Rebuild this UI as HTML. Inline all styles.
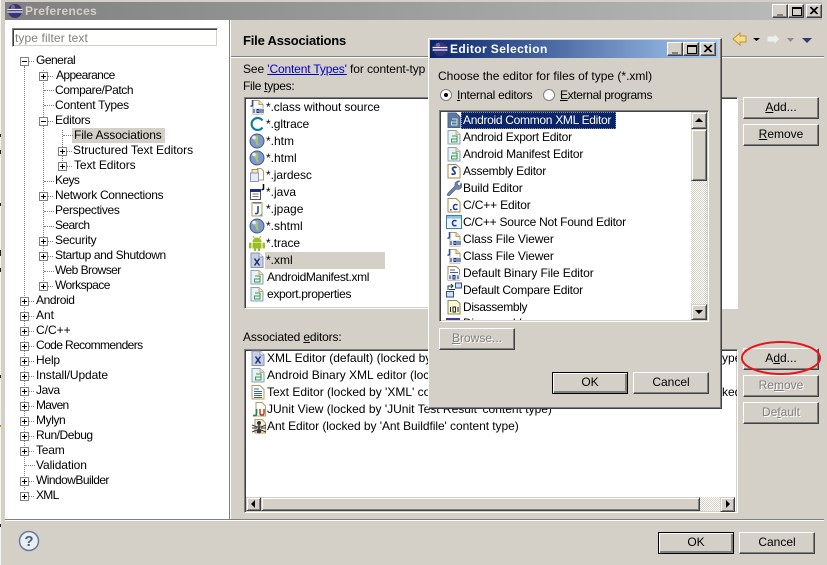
<!DOCTYPE html>
<html><head><meta charset="utf-8"><style>
html,body{margin:0;padding:0}
body{width:827px;height:565px;overflow:hidden;position:relative;background:#d4d0c8;font:12px/15px "Liberation Sans","IPAGothic",sans-serif;color:#000}
div,svg,span.a{position:absolute}
.t{position:absolute;white-space:nowrap;height:15px}
.tr{position:absolute;white-space:nowrap;height:15px}
.p,.m{position:absolute;width:7px;height:7px;margin-top:1px;border:1px solid #808080}
.p{background:linear-gradient(#000,#000) 1px 3px/5px 1px no-repeat,linear-gradient(#000,#000) 3px 1px/1px 5px no-repeat,#fff}
.m{background:linear-gradient(#000,#000) 1px 3px/5px 1px no-repeat,#fff}
.p:after,.m:after{content:"";position:absolute;left:8px;top:3px;width:5px;height:0;border-top:1px dotted #808080}
.v{position:absolute;width:0;border-left:1px dotted #808080}
.h{position:absolute;height:0;border-top:1px dotted #808080}
.b{position:absolute;box-sizing:border-box;border:1px solid;border-color:#fff #404040 #404040 #fff;box-shadow:inset -1px -1px #808080;background:#d4d0c8;text-align:center;line-height:19px}
.k{border-color:#000;box-shadow:inset 1px 1px #fff,inset -2px -2px #808080}
.d{color:#808080;text-shadow:1px 1px #fff}
.sunk{position:absolute;box-sizing:border-box;background:#fff;border:1px solid;border-color:#808080 #fff #fff #808080;box-shadow:inset 1px 1px #404040,inset -1px -1px #d4d0c8}
.sb{position:absolute;box-sizing:border-box;border:1px solid;border-color:#d4d0c8 #404040 #404040 #d4d0c8;box-shadow:inset 1px 1px #fff,inset -1px -1px #808080;background:#d4d0c8}
.dith{position:absolute;background:repeating-conic-gradient(#d4d0c8 0 25%,#fff 0 50%) 0 0/2px 2px}
.w{position:absolute;box-sizing:border-box;width:16px;height:14px;border:1px solid;border-color:#fff #404040 #404040 #fff;box-shadow:inset -1px -1px #808080;background:#d4d0c8}
u{text-decoration:underline}
svg.i{width:16px;height:16px;overflow:visible}
</style></head><body>
<svg width="0" height="0" style="position:absolute"><defs>
<symbol id="eclipse" viewBox="0 0 16 16"><circle cx="8" cy="8" r="7" fill="#3a3278"/><path d="M.5 6.500h15M.5 9h15" stroke="#f0f0fa" stroke-width="1.200"/><circle cx="6" cy="4" r="2" fill="#8a82c8" opacity=".7"/></symbol>
<symbol id="cls" viewBox="0 0 16 16"><path d="M4 1.500h6l4 4v9.500h-10z" fill="#fff" stroke="#b59a6a"/><path d="M10 1.500v4h4" fill="#f4e4bc" stroke="#b59a6a"/><path d="M3.500 1v5.500l-2 1" fill="none" stroke="#2a4e96" stroke-width="1.500"/><rect x="4" y="9" width="11" height="6" fill="#dbe6f6"/><path d="M5 10v4M8 10.500h2v3h-2zM12 10v4M14 10v4" stroke="#1b2f6b" fill="none"/></symbol>
<symbol id="gl" viewBox="0 0 16 16"><path d="M13.500 4.500a6 6 0 1 0 0 7" fill="none" stroke="#0e7f9c" stroke-width="2.200"/></symbol>
<symbol id="web" viewBox="0 0 16 16"><circle cx="8" cy="8" r="7" fill="#7c9ccc" stroke="#46587e"/><path d="M5 4c3-2 5 0 4 2-1 3 0 4 1 6-2 1-3-1-3-3-2-1-3-3-2-5z" fill="#b5c070"/><circle cx="5" cy="4.500" r="1.800" fill="#e8f0fa"/></symbol>
<symbol id="jar" viewBox="0 0 16 16"><path d="M8 1.500h4l2.500 2.500v9h-5" fill="#fff" stroke="#b59a6a"/><rect x="3" y="2.500" width="6" height="4" fill="#f6e6c0" stroke="#b08a44"/><rect x="1.500" y="6" width="8" height="8.500" fill="#e5ebf6" stroke="#8f9ab8"/></symbol>
<symbol id="java" viewBox="0 0 16 16"><rect x="1.500" y="5.500" width="10" height="10" fill="#fff" stroke="#555"/><rect x="1" y="5" width="11" height="3" fill="#1e2d88"/><path d="M3.500 10h6M3.500 12.500h6" stroke="#777"/><path d="M14.500 0v5l-2 1" fill="none" stroke="#000" stroke-width="1.500"/></symbol>
<symbol id="jp" viewBox="0 0 16 16"><rect x="3" y="1.500" width="10" height="13.500" fill="#fff" stroke="#b59a6a"/><path d="M5 1v2M7 1v2M9 1v2M11 1v2" stroke="#456"/><path d="M9 5v6q0 2-3 1.500" fill="none" stroke="#2a4e96" stroke-width="1.600"/><path d="M10 15l3-3v3z" fill="#6cb050"/></symbol>
<symbol id="andr" viewBox="0 0 16 16"><path d="M3.500 7a4.500 4.500 0 0 1 9 0z" fill="#98c024"/><path d="M5.500 3l-1.500-2M10.500 3l1.500-2" stroke="#98c024"/><rect x="3.500" y="7.500" width="9" height="6" fill="#98c024"/><rect x="0" y="7.500" width="2.500" height="6" rx="1" fill="#98c024"/><rect x="13.500" y="7.500" width="2.500" height="6" rx="1" fill="#98c024"/><rect x="5" y="13" width="2" height="3" fill="#98c024"/><rect x="9" y="13" width="2" height="3" fill="#98c024"/></symbol>
<symbol id="x" viewBox="0 0 16 16"><path d="M2 1h8l4 4v10.500h-12z" fill="#c5d0e6" stroke="#8b93ae"/><path d="M10 1v4h4" fill="#fff" stroke="#8b93ae"/><path d="M5.500 6.500l5 7M10.500 6.500l-5 7" stroke="#1b2f6b" stroke-width="1.500"/></symbol>
<symbol id="af" viewBox="0 0 16 16"><path d="M2 1.500h8l4 4v9.500h-12z" fill="#e8f0f8" stroke="#8aa0ba"/><path d="M10 1.500v4h4" fill="#f6dcb4" stroke="#d0a878"/><path d="M6 7h5v6h-5.500v-3h5" fill="none" stroke="#3f9a4a"/></symbol>
<symbol id="afs" viewBox="0 0 16 16"><path d="M2 1h8l4 4v10.500h-12z" fill="#5a78a6" stroke="#4a648e"/><path d="M6 7h5v6h-5.500v-3h5" fill="none" stroke="#cfe3cf"/></symbol>
<symbol id="txt" viewBox="0 0 16 16"><path d="M2 1.500h8l4 4v9.500h-12z" fill="#fff" stroke="#b59a6a"/><path d="M4 5h5M4 7.500h8M4 9.500h8M4 11.500h8M4 13.500h8" stroke="#3a5fa8"/></symbol>
<symbol id="ju" viewBox="0 0 16 16"><path d="M5 1.500h6l3.500 3.500v10h-9.500z" fill="#fff" stroke="#b59a6a"/><path d="M5.500 8v5q0 2-3.500 1.500" fill="none" stroke="#1a8a3a" stroke-width="1.700"/><path d="M9 8v4q0 2 2 2t2-2v-4" fill="none" stroke="#c8302a" stroke-width="1.500"/></symbol>
<symbol id="ant" viewBox="0 0 16 16"><path d="M4 1.500h7l3.500 3.500v10h-10.500z" fill="#f8f0dc" stroke="#b59a6a"/><ellipse cx="8" cy="5" rx="2" ry="2" fill="#333"/><ellipse cx="8" cy="9" rx="1.800" ry="2" fill="#555"/><ellipse cx="8" cy="13" rx="2.300" ry="2.500" fill="#333"/><path d="M1 7l5 2M15 7l-5 2M1 10h5M15 10h-5M1 14l5-2M15 14l-5-2" stroke="#333"/></symbol>
<symbol id="s" viewBox="0 0 16 16"><path d="M2 1.500h8l4 3.500v10h-12z" fill="#fff" stroke="#a8894a"/><path d="M10.500 5q-1-1.500-3-.5t0 3 1.500 3-3.500 .5" fill="none" stroke="#1e3c8c" stroke-width="1.700"/></symbol>
<symbol id="wr" viewBox="0 0 16 16"><path d="M1 15l1-2 7-7a4 4 0 0 1 5-5l-3 2 1 2 2 1 1-3a4 4 0 0 1-5 6l-7 7z" fill="#6f86b0" stroke="#4a5a80" stroke-width=".6"/></symbol>
<symbol id="cf" viewBox="0 0 16 16"><path d="M2 1.500h8l4 3.500v10h-12z" fill="#fff" stroke="#a8894a"/><path d="M11.500 8q-4-1.500-4 2t4 2" fill="none" stroke="#1e3c8c" stroke-width="1.500"/><rect x="4" y="12" width="1.500" height="1.500" fill="#1e3c8c"/></symbol>
<symbol id="cs" viewBox="0 0 16 16"><rect x=".5" y="1.500" width="15" height="13" fill="#eaf4fa" stroke="#3f7ea6"/><rect x="1" y="2" width="14" height="2.500" fill="#8ec0dc"/><path d="M10.500 7q-4-1.500-4 2t4 2.500" fill="none" stroke="#1e3c8c" stroke-width="1.500"/></symbol>
<symbol id="bin" viewBox="0 0 16 16"><path d="M2 1.500h8l3.500 3v10.500h-11.500z" fill="#fff" stroke="#a8894a"/><path d="M4 5h5M4 7.500h8" stroke="#3a5fa8"/><rect x="2" y="9.500" width="12.500" height="5.500" fill="#dbe6f6"/><path d="M4 10.500v3.500M7 10.500h2v3.500h-2zM12 10.500v3.500" stroke="#1b2f6b" fill="none"/></symbol>
<symbol id="cmp" viewBox="0 0 16 16"><rect x="9.500" y="1" width="6" height="5" fill="#cfe0f2" stroke="#2d4e86"/><rect x=".5" y="9.500" width="7" height="5.500" fill="#cfe0f2" stroke="#2d4e86"/><path d="M2 8v-4h5M5 2l2 2-2 2" fill="none" stroke="#234"/><path d="M3 7.500h6" stroke="#234"/></symbol>
<symbol id="dis" viewBox="0 0 16 16"><path d="M2 1.500h8.500l3.500 3v10.500h-12z" fill="#fbf8d8" stroke="#8a8660"/><path d="M4.500 8v5M7 8h2.500v5h-2.500zM12 8v5" stroke="#222" fill="none"/></symbol>
</defs></svg>

<!-- outer edge -->
<div style="left:0;top:0;width:1px;height:565px;background:#f4f4f4"></div>
<div style="left:0;top:134px;width:1px;height:3px;background:#222"></div><div style="left:0;top:150px;width:1px;height:4px;background:#222"></div><div style="left:0;top:203px;width:1px;height:3px;background:#222"></div><div style="left:0;top:250px;width:1px;height:6px;background:#222"></div><div style="left:0;top:268px;width:1px;height:4px;background:#222"></div><div style="left:0;top:375px;width:1px;height:3px;background:#222"></div><div style="left:0;top:425px;width:1px;height:2px;background:#c80"></div><div style="left:0;top:524px;width:1px;height:3px;background:#222"></div>

<!-- title bar -->
<div style="left:5px;top:2px;width:817px;height:18px;background:linear-gradient(90deg,#808080,#bcbcbc)"></div>
<svg class="i" style="left:7px;top:3px"><use href="#eclipse"/></svg>
<div class="t" style="left:25px;top:4px;font-weight:bold;color:#d4d0c8;letter-spacing:.3px">Preferences</div>
<div class="w" style="left:772px;top:4px"><div style="left:4px;top:9px;width:6px;height:2px;background:#808080"></div></div>
<div class="w" style="left:788px;top:4px"><div style="left:3px;top:2px;width:8px;height:6px;border:1px solid #000;border-top-width:2px"></div></div>
<div class="w" style="left:806px;top:4px"><svg width="14" height="12"><path d="M3 2l7 7M4 2l7 7M10 2l-7 7M11 2l-7 7" stroke="#000"/></svg></div>

<!-- left tree pane -->
<div style="left:5px;top:20px;width:224px;height:499px;background:#fff"></div>
<div style="left:229px;top:20px;width:1px;height:499px;background:#808080"></div>
<div style="left:230px;top:20px;width:1px;height:499px;background:#fff"></div>
<div style="left:5px;top:519px;width:819px;height:1px;background:#808080"></div>
<div style="left:5px;top:520px;width:819px;height:1px;background:#fff"></div>
<div class="sunk" style="left:12px;top:28px;width:206px;height:19px"></div>
<div class="t" style="left:15px;top:31px;color:#808080;letter-spacing:.1px">type filter text</div>

<div class="v" style="left:24px;top:66px;height:424px"></div>
<div class="v" style="left:43px;top:70px;height:215px"></div>
<div class="v" style="left:62px;top:130px;height:35px"></div>
<div style="left:72px;top:128px;width:93px;height:15px;background:#d4d0c8"></div>

<div class="m" style="left:20px;top:56px"></div><div class="tr" style="left:36px;top:53px;letter-spacing:-.5px">General</div>
<div class="p" style="left:39px;top:71px"></div><div class="tr" style="left:56px;top:68px;letter-spacing:-.6px">Appearance</div>
<div class="h" style="left:44px;top:90px;width:10px"></div><div class="tr" style="left:55px;top:83px;letter-spacing:-.4px">Compare/Patch</div>
<div class="h" style="left:44px;top:105px;width:10px"></div><div class="tr" style="left:55px;top:98px;letter-spacing:-.25px">Content Types</div>
<div class="m" style="left:39px;top:116px"></div><div class="tr" style="left:55px;top:113px;letter-spacing:-.3px">Editors</div>
<div class="h" style="left:63px;top:135px;width:10px"></div><div class="tr" style="left:74px;top:128px;letter-spacing:-.1px">File Associations</div>
<div class="p" style="left:58px;top:146px"></div><div class="tr" style="left:73px;top:143px;letter-spacing:-.05px">Structured Text Editors</div>
<div class="p" style="left:58px;top:161px"></div><div class="tr" style="left:74px;top:158px;letter-spacing:-.1px">Text Editors</div>
<div class="h" style="left:44px;top:181px;width:10px"></div><div class="tr" style="left:55px;top:173px;letter-spacing:-.6px">Keys</div>
<div class="p" style="left:39px;top:191px"></div><div class="tr" style="left:55px;top:188px;letter-spacing:-.3px">Network Connections</div>
<div class="h" style="left:44px;top:211px;width:10px"></div><div class="tr" style="left:55px;top:203px;letter-spacing:-.35px">Perspectives</div>
<div class="h" style="left:44px;top:226px;width:10px"></div><div class="tr" style="left:55px;top:218px;letter-spacing:-.6px">Search</div>
<div class="p" style="left:39px;top:236px"></div><div class="tr" style="left:55px;top:233px;letter-spacing:-.25px">Security</div>
<div class="p" style="left:39px;top:251px"></div><div class="tr" style="left:55px;top:248px;letter-spacing:-.4px">Startup and Shutdown</div>
<div class="h" style="left:44px;top:271px;width:10px"></div><div class="tr" style="left:55px;top:263px;letter-spacing:-.55px">Web Browser</div>
<div class="p" style="left:39px;top:281px"></div><div class="tr" style="left:55px;top:278px;letter-spacing:-.55px">Workspace</div>
<div class="p" style="left:20px;top:296px"></div><div class="tr" style="left:36px;top:293px;letter-spacing:-.4px">Android</div>
<div class="p" style="left:20px;top:311px"></div><div class="tr" style="left:36px;top:308px">Ant</div>
<div class="p" style="left:20px;top:326px"></div><div class="tr" style="left:36px;top:323px">C/C++</div>
<div class="p" style="left:20px;top:341px"></div><div class="tr" style="left:36px;top:338px;letter-spacing:-.6px">Code Recommenders</div>
<div class="p" style="left:20px;top:356px"></div><div class="tr" style="left:36px;top:353px;letter-spacing:-.2px">Help</div>
<div class="p" style="left:20px;top:371px"></div><div class="tr" style="left:36px;top:368px;letter-spacing:-.1px">Install/Update</div>
<div class="p" style="left:20px;top:386px"></div><div class="tr" style="left:36px;top:383px;letter-spacing:-.4px">Java</div>
<div class="p" style="left:20px;top:401px"></div><div class="tr" style="left:36px;top:398px;letter-spacing:-.7px">Maven</div>
<div class="p" style="left:20px;top:416px"></div><div class="tr" style="left:36px;top:413px;letter-spacing:-.4px">Mylyn</div>
<div class="p" style="left:20px;top:431px"></div><div class="tr" style="left:36px;top:428px;letter-spacing:-.45px">Run/Debug</div>
<div class="p" style="left:20px;top:446px"></div><div class="tr" style="left:36px;top:443px;letter-spacing:-.2px">Team</div>
<div class="h" style="left:25px;top:465px;width:10px"></div><div class="tr" style="left:36px;top:458px;letter-spacing:-.1px">Validation</div>
<div class="p" style="left:20px;top:476px"></div><div class="tr" style="left:36px;top:473px;letter-spacing:-.55px">WindowBuilder</div>
<div class="p" style="left:20px;top:491px"></div><div class="tr" style="left:36px;top:488px;letter-spacing:-.7px">XML</div>

<!-- right header -->
<div class="t" style="left:243px;top:33px;font-weight:bold;font-size:13px;letter-spacing:-.2px">File Associations</div>
<div style="left:231px;top:56px;width:593px;height:1px;background:#808080"></div>
<div style="left:231px;top:57px;width:593px;height:1px;background:#fff"></div>
<svg style="left:730px;top:30px" width="90" height="18"><path d="M3 9l7-6v3h6v6h-6v3z" fill="#f6dc88" stroke="#c89030"/><path d="M23 8h7l-3.500 3z" fill="#000"/><path d="M37 6h7v-3l6 6-6 6v-3h-7z" fill="#eeeeea" stroke="#d0d0c8"/><path d="M57 8h7l-3.500 4z" fill="#8c8c8c"/><path d="M72 8h10l-5 5z" fill="#3c3670"/></svg>

<div class="t" style="left:243px;top:62px;letter-spacing:-.1px">See <a style="color:#0000c8;text-decoration:underline;letter-spacing:-.15px">'Content Types'</a> for content-typ</div>
<div class="t" style="left:243px;top:79px;letter-spacing:-.3px">File <u>t</u>ypes:</div>

<!-- file types list -->
<div class="sunk" style="left:244px;top:97px;width:190px;height:212px"></div>
<div style="left:265px;top:252px;width:120px;height:17px;background:#d4d0c8"></div>
<svg class="i" style="left:249px;top:99px"><use href="#cls"/></svg><div class="t" style="left:266px;top:100px;letter-spacing:-.1px">*.class without source</div>
<svg class="i" style="left:249px;top:116px"><use href="#gl"/></svg><div class="t" style="left:266px;top:117px;letter-spacing:-.1px">*.gltrace</div>
<svg class="i" style="left:249px;top:133px"><use href="#web"/></svg><div class="t" style="left:266px;top:134px">*.htm</div>
<svg class="i" style="left:249px;top:150px"><use href="#web"/></svg><div class="t" style="left:266px;top:151px">*.html</div>
<svg class="i" style="left:249px;top:167px"><use href="#jar"/></svg><div class="t" style="left:266px;top:168px;letter-spacing:-.1px">*.jardesc</div>
<svg class="i" style="left:249px;top:184px"><use href="#java"/></svg><div class="t" style="left:266px;top:185px">*.java</div>
<svg class="i" style="left:249px;top:201px"><use href="#jp"/></svg><div class="t" style="left:266px;top:202px">*.jpage</div>
<svg class="i" style="left:249px;top:218px"><use href="#web"/></svg><div class="t" style="left:266px;top:219px">*.shtml</div>
<svg class="i" style="left:249px;top:235px"><use href="#andr"/></svg><div class="t" style="left:266px;top:236px;letter-spacing:-.1px">*.trace</div>
<svg class="i" style="left:249px;top:252px"><use href="#x"/></svg><div class="t" style="left:266px;top:253px">*.xml</div>
<svg class="i" style="left:249px;top:269px"><use href="#af"/></svg><div class="t" style="left:267px;top:270px;letter-spacing:-.35px">AndroidManifest.xml</div>
<svg class="i" style="left:249px;top:286px"><use href="#af"/></svg><div class="t" style="left:267px;top:287px;letter-spacing:-.35px">export.properties</div>
<div class="sunk" style="left:700px;top:97px;width:38px;height:212px;box-shadow:inset 0 1px #404040"></div>

<div class="b" style="left:743px;top:97px;width:76px;height:22px"><u>A</u>dd...</div>
<div class="b" style="left:743px;top:124px;width:76px;height:22px"><u>R</u>emove</div>

<div class="t" style="left:243px;top:330px;letter-spacing:-.15px">Associated <u>e</u>ditors:</div>
<!-- associated list -->
<div class="sunk" style="left:244px;top:349px;width:494px;height:164px"></div>
<svg class="i" style="left:250px;top:350px"><use href="#x"/></svg><div class="t" style="left:267px;top:351px">XML Editor (default) (locked by 'XML' content type)</div>
<svg class="i" style="left:250px;top:367px"><use href="#af"/></svg><div class="t" style="left:267px;top:368px">Android Binary XML editor (locked by 'Android Binary XML' content type)</div>
<svg class="i" style="left:250px;top:384px"><use href="#txt"/></svg><div class="t" style="left:267px;top:385px">Text Editor (locked by 'XML' content type)</div>
<svg class="i" style="left:251px;top:401px"><use href="#ju"/></svg><div class="t" style="left:267px;top:402px">JUnit View (locked by 'JUnit Test Result' content type)</div>
<svg class="i" style="left:251px;top:418px"><use href="#ant"/></svg><div class="t" style="left:267px;top:419px;letter-spacing:-.06px">Ant Editor (locked by 'Ant Buildfile' content type)</div>
<div class="t" style="left:722px;top:351px;width:15px;overflow:hidden">ype</div>
<div class="t" style="left:722px;top:385px;width:15px;overflow:hidden">ked</div>
<div class="dith" style="left:700px;top:497px;width:21px;height:14px"></div>
<div class="sb" style="left:261px;top:497px;width:439px;height:14px"></div>
<div class="sb" style="left:246px;top:497px;width:15px;height:14px"><svg width="13" height="12"><path d="M8 2v8l-4-4z"/></svg></div>
<div class="sb" style="left:720px;top:497px;width:15px;height:15px"><svg width="13" height="12"><path d="M5 2v8l4-4z"/></svg></div>

<div class="b" style="left:743px;top:348px;width:76px;height:22px">A<u>d</u>d...</div>
<div class="b d" style="left:743px;top:375px;width:76px;height:22px">Re<u>m</u>ove</div>
<div class="b d" style="left:743px;top:402px;width:76px;height:22px">De<u>f</u>ault</div>
<svg style="left:738px;top:338px" width="88" height="40"><ellipse cx="43" cy="20" rx="39" ry="16" fill="none" stroke="#e8141c" stroke-width="2"/></svg>

<!-- bottom -->
<svg style="left:18px;top:530px" width="22" height="22"><circle cx="11" cy="11" r="9.500" fill="#e8eef6" stroke="#6a7a96" stroke-width="1.500"/><text x="11" y="16" text-anchor="middle" font-family="Liberation Sans" font-size="15" font-weight="bold" fill="#505a70">?</text></svg>
<div class="b k" style="left:658px;top:532px;width:76px;height:22px">OK</div>
<div class="b" style="left:739px;top:532px;width:76px;height:22px">Cancel</div>

<!-- dialog -->
<div style="left:428px;top:38px;width:294px;height:371px;box-sizing:border-box;background:#d4d0c8;border:1px solid;border-color:#fff #404040 #404040 #fff;box-shadow:inset -1px -1px #808080"></div>
<div style="left:430px;top:40px;width:288px;height:18px;background:linear-gradient(90deg,#0a246a,#a6caf0)"></div>
<svg class="i" style="left:432px;top:41px"><use href="#eclipse"/></svg>
<div class="t" style="left:450px;top:42px;font-weight:bold;color:#fff;letter-spacing:.4px">Editor Selection</div>
<div class="w" style="left:667px;top:42px"><div style="left:4px;top:9px;width:6px;height:2px;background:#808080"></div></div>
<div class="w" style="left:683px;top:42px"><div style="left:3px;top:2px;width:8px;height:6px;border:1px solid #000;border-top-width:2px"></div></div>
<div class="w" style="left:700px;top:42px"><svg width="14" height="12"><path d="M3 2l7 7M4 2l7 7M10 2l-7 7M11 2l-7 7" stroke="#000"/></svg></div>
<div class="t" style="left:438px;top:69px">Choose the editor for files of type (*.xml)</div>
<svg style="left:439px;top:88px" width="14" height="14"><circle cx="7" cy="7" r="5.500" fill="#fff" stroke="#808080"/><circle cx="7" cy="7" r="2" fill="#000"/></svg>
<div class="t" style="left:457px;top:88px;letter-spacing:-.25px"><u>I</u>nternal editors</div>
<svg style="left:542px;top:88px" width="14" height="14"><circle cx="7" cy="7" r="5.500" fill="#fff" stroke="#808080"/></svg>
<div class="t" style="left:560px;top:88px;letter-spacing:-.35px"><u>E</u>xternal programs</div>

<div class="sunk" style="left:439px;top:110px;width:270px;height:212px;overflow:hidden"></div>
<div style="left:461px;top:112px;width:155px;height:17px;background:#0a246a;outline:1px dotted #8a94b4;outline-offset:-1px"></div>
<svg class="i" style="left:446px;top:112px"><use href="#afs"/></svg><div class="t" style="left:463px;top:113px;color:#fff;letter-spacing:-.3px">Android Common XML Editor</div>
<svg class="i" style="left:446px;top:129px"><use href="#af"/></svg><div class="t" style="left:463px;top:130px;letter-spacing:-.25px">Android Export Editor</div>
<svg class="i" style="left:446px;top:146px"><use href="#af"/></svg><div class="t" style="left:463px;top:147px;letter-spacing:-.2px">Android Manifest Editor</div>
<svg class="i" style="left:446px;top:163px"><use href="#s"/></svg><div class="t" style="left:463px;top:164px;letter-spacing:-.25px">Assembly Editor</div>
<svg class="i" style="left:446px;top:180px"><use href="#wr"/></svg><div class="t" style="left:463px;top:181px;letter-spacing:-.15px">Build Editor</div>
<svg class="i" style="left:446px;top:197px"><use href="#cf"/></svg><div class="t" style="left:463px;top:198px;letter-spacing:-.15px">C/C++ Editor</div>
<svg class="i" style="left:446px;top:214px"><use href="#cs"/></svg><div class="t" style="left:463px;top:215px;letter-spacing:-.25px">C/C++ Source Not Found Editor</div>
<svg class="i" style="left:446px;top:231px"><use href="#cls"/></svg><div class="t" style="left:463px;top:232px;letter-spacing:-.1px">Class File Viewer</div>
<svg class="i" style="left:446px;top:248px"><use href="#cls"/></svg><div class="t" style="left:463px;top:249px;letter-spacing:-.1px">Class File Viewer</div>
<svg class="i" style="left:446px;top:265px"><use href="#bin"/></svg><div class="t" style="left:463px;top:266px;letter-spacing:-.08px">Default Binary File Editor</div>
<svg class="i" style="left:446px;top:282px"><use href="#cmp"/></svg><div class="t" style="left:463px;top:283px;letter-spacing:-.25px">Default Compare Editor</div>
<svg class="i" style="left:446px;top:299px"><use href="#dis"/></svg><div class="t" style="left:463px;top:300px;letter-spacing:-.35px">Disassembly</div>
<div style="left:441px;top:317px;width:250px;height:3px;overflow:hidden"><div class="t" style="left:22px;top:-1px;letter-spacing:-.35px">Disassembly</div><div style="left:5px;top:1px;width:14px;height:2px;background:#3c3c9c"></div></div>
<div class="dith" style="left:691px;top:112px;width:16px;height:208px"></div>
<div class="sb" style="left:691px;top:112px;width:16px;height:17px"><svg width="14" height="14"><path d="M3 9h8l-4-4z"/></svg></div>
<div class="sb" style="left:691px;top:129px;width:16px;height:52px"></div>
<div class="sb" style="left:691px;top:304px;width:16px;height:16px"><svg width="14" height="14"><path d="M3 5h8l-4 4z"/></svg></div>
<div class="b d" style="left:439px;top:328px;width:76px;height:22px"><u>B</u>rowse...</div>
<div class="b k" style="left:552px;top:372px;width:76px;height:22px">OK</div>
<div class="b" style="left:633px;top:372px;width:76px;height:22px">Cancel</div>
</body></html>
